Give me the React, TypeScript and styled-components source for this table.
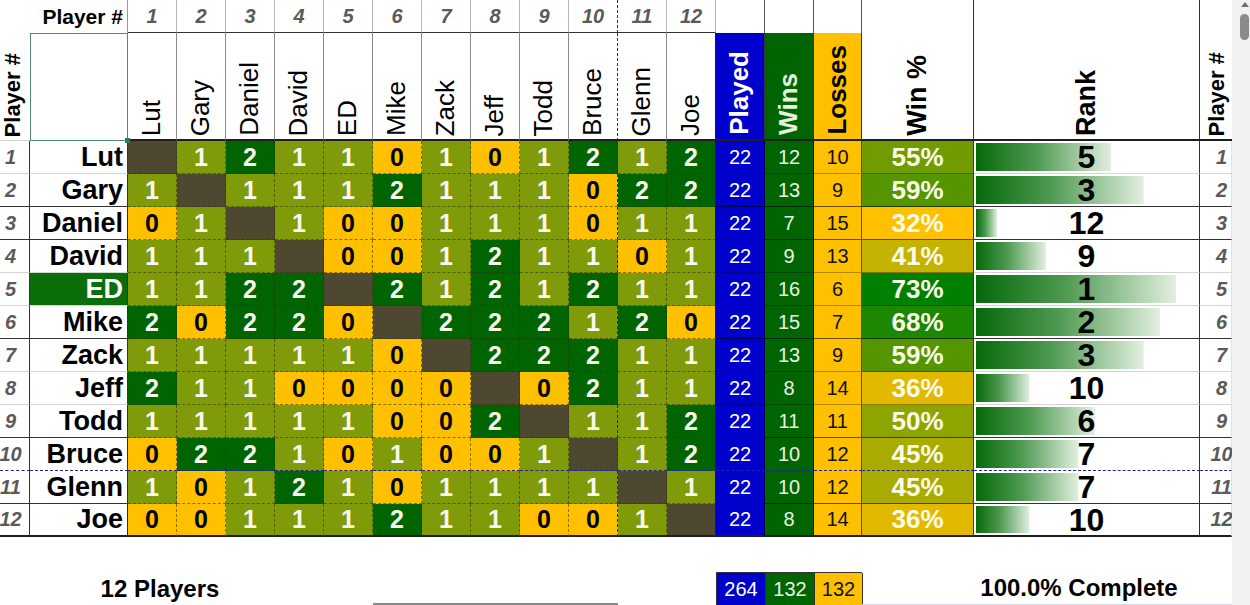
import React from "react";
import styled, { createGlobalStyle } from "styled-components";

const GlobalStyle = createGlobalStyle`
  html, body { margin: 0; padding: 0; background: #fff; overflow: hidden; }
  body { font-family: "Liberation Sans", Arial, Helvetica, sans-serif; }
  *, *::before, *::after { box-sizing: border-box; }
`;

const NAVY = "#23239a";
const DASH = "rgba(45, 45, 10, 0.55)";
const GRAY = "#5a5a5a";

type Edge = "light" | "dark" | "navy" | "end";

const bottomLine = (e: Edge, light: string, dark: string) =>
  e === "end"
    ? "2px solid #1f1f1f"
    : e === "navy"
    ? `1px dashed ${NAVY}`
    : e === "dark"
    ? `1px solid ${dark}`
    : `1px solid ${light}`;

const names = ["Lut", "Gary", "Daniel", "David", "ED", "Mike", "Zack", "Jeff", "Todd", "Bruce", "Glenn", "Joe"];
const X = -1;
const matrix: number[][] = [
  [X, 1, 2, 1, 1, 0, 1, 0, 1, 2, 1, 2],
  [1, X, 1, 1, 1, 2, 1, 1, 1, 0, 2, 2],
  [0, 1, X, 1, 0, 0, 1, 1, 1, 0, 1, 1],
  [1, 1, 1, X, 0, 0, 1, 2, 1, 1, 0, 1],
  [1, 1, 2, 2, X, 2, 1, 2, 1, 2, 1, 1],
  [2, 0, 2, 2, 0, X, 2, 2, 2, 1, 2, 0],
  [1, 1, 1, 1, 1, 0, X, 2, 2, 2, 1, 1],
  [2, 1, 1, 0, 0, 0, 0, X, 0, 2, 1, 1],
  [1, 1, 1, 1, 1, 0, 0, 2, X, 1, 1, 2],
  [0, 2, 2, 1, 0, 1, 0, 0, 1, X, 1, 2],
  [1, 0, 1, 2, 1, 0, 1, 1, 1, 1, X, 1],
  [0, 0, 1, 1, 1, 2, 1, 1, 0, 0, 1, X],
];
const edges: Edge[] = ["light", "dark", "dark", "light", "light", "dark", "light", "light", "dark", "navy", "dark", "end"];

/* ---------- layout ---------- */

const Page = styled.div`
  display: flex;
  width: 1250px;
  height: 605px;
  overflow: hidden;
  background: #fff;
`;

const Sheet = styled.div`
  flex: none;
  width: 1232px;
  display: grid;
  grid-template-columns: 30px 98px repeat(12, 49px) 49px 49px 48px 112px 226px 32px;
  grid-template-rows: 33px 108px repeat(12, 33px) 35px 33px;
`;

/* ---------- header ---------- */

const VText = styled.span<{ $size: number; $bold?: boolean; $color?: string }>`
  writing-mode: vertical-rl;
  transform: rotate(180deg);
  white-space: nowrap;
  line-height: 1.05;
  font-size: ${(p) => p.$size}px;
  font-weight: ${(p) => (p.$bold ? 700 : 400)};
  color: ${(p) => p.$color ?? "#000"};
`;

const SideHead = styled.div<{ $padLeft?: number; $padRight?: number }>`
  grid-row: span 2;
  display: flex;
  align-items: flex-end;
  justify-content: center;
  padding: 0 ${(p) => p.$padRight ?? 0}px 3px ${(p) => p.$padLeft ?? 0}px;
  border-bottom: 1px solid #d2d2d2;
`;

const RightHead = styled(SideHead)`
  border-bottom: 2px solid #1f1f1f;
`;

const PlayerLabel = styled.div`
  display: flex;
  align-items: center;
  justify-content: flex-end;
  padding-right: 4px;
  font-size: 21px;
  font-weight: 700;
  color: #000;
  border-right: 1px solid #9a9a9a;
`;

const NumHead = styled.div<{ $split?: boolean }>`
  display: flex;
  align-items: center;
  justify-content: center;
  font-size: 20px;
  font-weight: 700;
  font-style: italic;
  color: ${GRAY};
  border-bottom: 1px solid #333;
  border-right: ${(p) => (p.$split ? `1px dashed ${NAVY}` : "1px solid #b4b4b4")};
`;

const BlankHead = styled.div`
  border-right: 1px solid #555;
`;

const BigHead = styled.div`
  grid-row: span 2;
  display: flex;
  align-items: flex-end;
  justify-content: center;
  padding-bottom: 3px;
  border-right: 1px solid #333;
  border-bottom: 2px solid #1f1f1f;
`;

const SelectBox = styled.div`
  position: relative;
  border: 1px solid #4f8c78;
  &::after {
    content: "";
    position: absolute;
    right: -3px;
    bottom: -3px;
    width: 5px;
    height: 5px;
    background: #2f7a5c;
  }
`;

const NameHead = styled.div<{ $split?: boolean; $last?: boolean }>`
  display: flex;
  align-items: flex-end;
  justify-content: center;
  padding-bottom: 3px;
  border-bottom: 2px solid #1f1f1f;
  border-right: ${(p) =>
    p.$split ? `1px dashed ${NAVY}` : p.$last ? "1px solid #222" : "1px solid #8c8c8c"};
`;

const StatHead = styled.div<{ $bg: string }>`
  display: flex;
  align-items: flex-end;
  justify-content: center;
  padding-bottom: 4px;
  background: ${(p) => p.$bg};
  border-right: 1px solid #333;
  border-bottom: 2px solid #1f1f1f;
`;

/* ---------- body ---------- */

const RowNum = styled.div<{ $edge: Edge; $right?: boolean }>`
  display: flex;
  align-items: center;
  justify-content: center;
  padding: ${(p) => (p.$right ? "0 0 0 12px" : "0 8px 0 0")};
  font-size: 20px;
  font-weight: 700;
  font-style: italic;
  color: ${GRAY};
  white-space: nowrap;
  border-right: ${(p) => (p.$right ? "1px solid #e2e2e2" : "1px solid #333")};
  border-bottom: ${(p) => bottomLine(p.$edge, "#d4d4d4", "#333")};
`;

const NameCell = styled.div<{ $edge: Edge; $hi?: boolean }>`
  display: flex;
  align-items: center;
  justify-content: flex-end;
  padding-right: 4px;
  font-size: 27px;
  font-weight: 700;
  white-space: nowrap;
  color: ${(p) => (p.$hi ? "#fff" : "#000")};
  background: ${(p) => (p.$hi ? "#0a6e0a" : "#fff")};
  border-right: 1px solid #333;
  border-bottom: ${(p) => bottomLine(p.$edge, "#d4d4d4", "#333")};
`;

const cellBg = (v: number) => (v < 0 ? "#4e4830" : v === 0 ? "#ffc000" : v === 1 ? "#7f9b0a" : "#006400");

const MatrixCell = styled.div<{ $v: number; $edge: Edge; $split?: boolean; $last?: boolean }>`
  display: flex;
  align-items: center;
  justify-content: center;
  font-size: 25px;
  font-weight: 700;
  background: ${(p) => cellBg(p.$v)};
  color: ${(p) => (p.$v === 0 ? "#000" : "#f8f8ec")};
  border-right: ${(p) =>
    p.$last ? "1px solid #1f1f1f" : p.$split ? `1px dashed ${NAVY}` : `1px dashed ${DASH}`};
  border-bottom: ${(p) =>
    p.$edge === "end" ? "2px solid #1f1f1f" : p.$edge === "navy" ? `1px dashed ${NAVY}` : `1px dashed ${DASH}`};
`;

const StatCell = styled.div<{ $bg: string; $fg: string; $edge: Edge }>`
  display: flex;
  align-items: center;
  justify-content: center;
  font-size: 20px;
  background: ${(p) => p.$bg};
  color: ${(p) => p.$fg};
  border-right: 1px solid rgba(0, 0, 0, 0.6);
  border-bottom: ${(p) => bottomLine(p.$edge, "rgba(0,0,0,0.3)", "rgba(0,0,0,0.6)")};
`;

const PctCell = styled.div<{ $edge: Edge }>`
  display: flex;
  align-items: center;
  justify-content: center;
  font-size: 26px;
  font-weight: 700;
  color: #fbfbea;
  border-right: 1px solid #333;
  border-bottom: ${(p) => bottomLine(p.$edge, "rgba(0,0,0,0.35)", "rgba(0,0,0,0.6)")};
`;

const RankCell = styled.div<{ $edge: Edge }>`
  display: flex;
  align-items: center;
  justify-content: center;
  font-size: 32px;
  font-weight: 700;
  line-height: 1;
  color: #000;
  background-image: linear-gradient(90deg, #05690a 0%, #4f9a52 45%, #e2efe0 100%);
  background-repeat: no-repeat;
  background-position: 2px 2px;
  border-right: 1px solid #333;
  border-bottom: ${(p) => bottomLine(p.$edge, "#d4d4d4", "#333")};
`;

/* ---------- footer ---------- */

const Spacer = styled.div`
  grid-column: 1 / -1;
`;

const FootLabel = styled.div`
  grid-column: 1 / 7;
  display: flex;
  align-items: center;
  justify-content: center;
  padding-right: 4px;
  font-size: 24px;
  font-weight: 700;
  color: #000;
`;

const FootRule = styled.div`
  grid-column: 8 / 13;
  align-self: end;
  height: 2px;
  background: #8a8a8a;
`;

const Totals = styled.div`
  grid-column: 15 / 18;
  display: grid;
  grid-template-columns: 49px 49px 48px;
  border-top: 1px solid #333;
  border-left: 1px solid #333;
`;

const TotalBox = styled.div<{ $bg: string; $fg: string }>`
  display: flex;
  align-items: center;
  justify-content: center;
  font-size: 20px;
  background: ${(p) => p.$bg};
  color: ${(p) => p.$fg};
  border-right: 1px solid #333;
`;

const Complete = styled.div`
  grid-column: 18 / 21;
  display: flex;
  align-items: center;
  justify-content: center;
  padding-left: 64px;
  font-size: 24px;
  font-weight: 700;
  color: #000;
  border-bottom: 1px solid #d6dce6;
`;

/* ---------- scrollbar ---------- */

const Scrollbar = styled.div`
  flex: 1;
  display: flex;
  flex-direction: column;
  align-items: center;
  padding: 2px 0 0 7px;
  background: #f1f1f1;
`;

const ScrollArrow = styled.div`
  width: 0;
  height: 0;
  border-left: 4px solid transparent;
  border-right: 4px solid transparent;
  border-bottom: 5px solid #6e6e6e;
`;

const ScrollThumb = styled.div`
  margin-top: 7px;
  width: 9px;
  height: 26px;
  border-radius: 5px;
  background: #8a8a8a;
`;

/* ---------- app ---------- */

export default function App() {
  const rows = names.map((name, i) => {
    const vals = matrix[i];
    const wins = vals.reduce((s, v) => s + (v > 0 ? v : 0), 0);
    return { name, vals, wins, played: 22, losses: 22 - wins };
  });
  const minW = Math.min(...rows.map((r) => r.wins));
  const maxW = Math.max(...rows.map((r) => r.wins));
  const rankOf = (w: number) => 1 + rows.filter((r) => r.wins > w).length;
  const pctColor = (w: number) => {
    const t = (w - minW) / (maxW - minW);
    const r = Math.round(255 * (1 - t));
    const g = Math.round(192 - 64 * t);
    return `rgb(${r}, ${g}, 0)`;
  };
  const totalPlayed = rows.reduce((s, r) => s + r.played, 0);
  const totalWins = rows.reduce((s, r) => s + r.wins, 0);
  const totalLosses = rows.reduce((s, r) => s + r.losses, 0);

  return (
    <>
      <GlobalStyle />
      <Page>
        <Sheet>
          {/* header row 1 */}
          <SideHead $padRight={5}>
            <VText $size={22} $bold>Player #</VText>
          </SideHead>
          <PlayerLabel>Player #</PlayerLabel>
          {names.map((_, c) => (
            <NumHead key={`n${c}`} $split={c === 9}>
              {c + 1}
            </NumHead>
          ))}
          <BlankHead />
          <BlankHead />
          <BlankHead />
          <BigHead>
            <VText $size={27} $bold>Win %</VText>
          </BigHead>
          <BigHead>
            <VText $size={27} $bold>Rank</VText>
          </BigHead>
          <RightHead $padLeft={2}>
            <VText $size={22} $bold>Player #</VText>
          </RightHead>

          {/* header row 2 */}
          <SelectBox />
          {names.map((n, c) => (
            <NameHead key={`h${c}`} $split={c === 9} $last={c === 11}>
              <VText $size={26}>{n}</VText>
            </NameHead>
          ))}
          <StatHead $bg="#0000cd">
            <VText $size={26} $bold $color="#ffffff">Played</VText>
          </StatHead>
          <StatHead $bg="#006400">
            <VText $size={26} $bold $color="#e4f3df">Wins</VText>
          </StatHead>
          <StatHead $bg="#ffc000">
            <VText $size={26} $bold $color="#000">Losses</VText>
          </StatHead>

          {/* data rows */}
          {rows.map((r, i) => {
            const edge = edges[i];
            const rank = rankOf(r.wins);
            const barW = 21 + (12 - rank) * 16.3;
            return (
              <React.Fragment key={r.name}>
                <RowNum $edge={edge}>{i + 1}</RowNum>
                <NameCell $edge={edge} $hi={r.name === "ED"}>
                  {r.name}
                </NameCell>
                {r.vals.map((v, c) => (
                  <MatrixCell key={c} $v={v} $edge={edge} $split={c === 9} $last={c === 11}>
                    {v >= 0 ? v : ""}
                  </MatrixCell>
                ))}
                <StatCell $bg="#0000cd" $fg="#ffffff" $edge={edge}>
                  {r.played}
                </StatCell>
                <StatCell $bg="#006400" $fg="#e8f3e4" $edge={edge}>
                  {r.wins}
                </StatCell>
                <StatCell $bg="#ffc000" $fg="#111" $edge={edge}>
                  {r.losses}
                </StatCell>
                <PctCell $edge={edge} style={{ background: pctColor(r.wins) }}>
                  {Math.round((r.wins / r.played) * 100)}%
                </PctCell>
                <RankCell $edge={edge} style={{ backgroundSize: `${barW}px calc(100% - 4px)` }}>
                  {rank}
                </RankCell>
                <RowNum $edge={edge} $right>
                  {i + 1}
                </RowNum>
              </React.Fragment>
            );
          })}

          {/* footer */}
          <Spacer />
          <FootLabel>{rows.length} Players</FootLabel>
          <FootRule />
          <Totals>
            <TotalBox $bg="#0000cd" $fg="#ffffff">{totalPlayed}</TotalBox>
            <TotalBox $bg="#006400" $fg="#e8f3e4">{totalWins}</TotalBox>
            <TotalBox $bg="#ffc000" $fg="#111">{totalLosses}</TotalBox>
          </Totals>
          <Complete>100.0% Complete</Complete>
        </Sheet>
        <Scrollbar>
          <ScrollArrow />
          <ScrollThumb />
        </Scrollbar>
      </Page>
    </>
  );
}
